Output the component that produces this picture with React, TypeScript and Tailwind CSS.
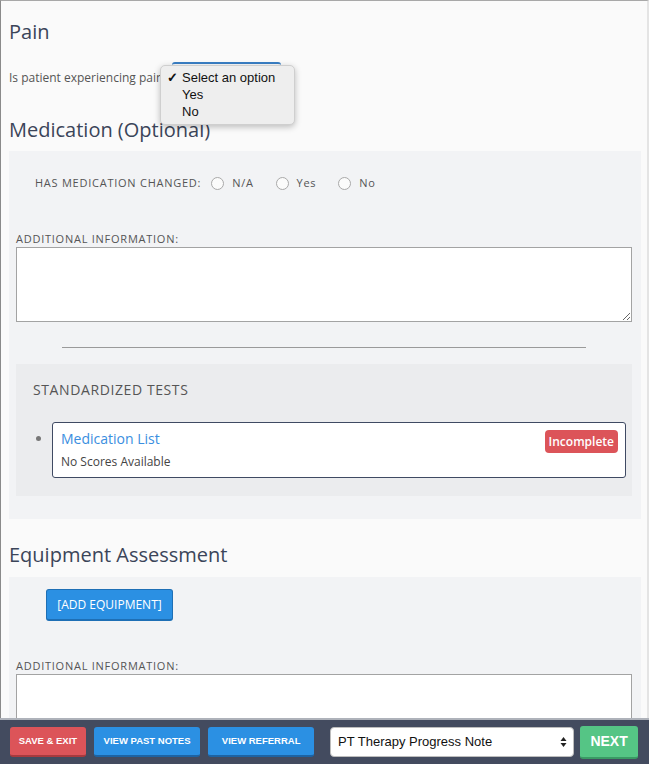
import React from "react";

const sans = { fontFamily: '"Open Sans", "Noto Sans", sans-serif' };
const helv = { fontFamily: '"Liberation Sans", Arial, sans-serif' };

function Radio({ label }: { label: string }) {
  return (
    <label className="flex items-center gap-[8px]">
      <span className="w-[13px] h-[13px] rounded-full border border-[#a9a9a9] bg-[#fbfbfb]" />
      <span className="text-[11px] tracking-[0.7px] text-[#555]">{label}</span>
    </label>
  );
}

function Label({ children }: { children: React.ReactNode }) {
  return (
    <div className="h-[16px] leading-[16px] text-[11px] tracking-[0.75px] uppercase text-[#555]">
      {children}
    </div>
  );
}

export default function App() {
  return (
    <div className="w-[649px] h-[764px] flex flex-col overflow-hidden bg-white" style={sans}>
      <div className="relative flex-1 overflow-hidden border-t border-[#a8a8a8] border-l border-l-[#8a8a8a] border-r-2 border-r-[#e4e4e4] bg-[#fafafa] pl-[8px] pr-[6px]">
        <h2 className="mt-[19px] text-[20px] leading-[24px] text-[#3b4559]">Pain</h2>

        <div className="mt-[18px] h-[32px] flex items-center">
          <span className="text-[12px] text-[#555]">Is patient experiencing pain</span>
          <div className="ml-[9px] w-[109px] h-[32px] border-t-2 border-[#3a7fc4] rounded-[3px]" />
        </div>

        {/* open select menu */}
        <div
          className="absolute left-[159px] top-[64px] w-[135px] h-[60px] rounded-[5px] border border-[#cfcfcf] bg-[#eeeeee] shadow-[0_2px_6px_rgba(0,0,0,0.25)] pt-[3px] text-[13px] text-[#111]"
          style={helv}
        >
          <div className="flex h-[17px] items-center">
            <span className="w-[21px] pl-[6px] text-[13px] font-bold">✓</span>
            <span>Select an option</span>
          </div>
          <div className="h-[17px] leading-[17px] pl-[21px]">Yes</div>
          <div className="h-[17px] leading-[17px] pl-[21px]">No</div>
        </div>

        <h2 className="mt-[24px] text-[20px] leading-[24px] text-[#3b4559]">Medication (Optional)</h2>

        <div className="mt-[9px] bg-[#f2f3f5] pl-[7px] pr-[9px] pt-[22px] pb-[23px]">
          <div className="flex items-center h-[20px] pl-[19px] gap-[9px]">
            <span className="text-[11px] tracking-[0.75px] text-[#555] mr-[1px]">HAS MEDICATION CHANGED:</span>
            <div className="flex items-center gap-[22px]">
              <Radio label="N/A" />
              <Radio label="Yes" />
              <Radio label="No" />
            </div>
          </div>

          <div className="mt-[38px]">
            <Label>Additional Information:</Label>
            <textarea className="block w-full h-[75px] border border-[#a3a3a3] bg-white resize-y" />
          </div>

          <div className="mt-[25px] ml-[46px] mr-[46px] border-t border-[#9a9a9a]" />

          <div className="mt-[16px] bg-[#ebecee] pl-[17px] pr-[6px] pt-[16px] pb-[18px]">
            <div className="text-[14px] leading-[20px] tracking-[0.6px] text-[#555]">STANDARDIZED TESTS</div>
            <div className="mt-[22px] flex">
              <div className="w-[19px] pt-[14px] pl-[3px]">
                <span className="block w-[5px] h-[5px] rounded-full bg-[#777]" />
              </div>
              <div className="flex-1 h-[56px] rounded-[3px] border border-[#3f4a63] bg-white pl-[8px] pr-[7px] pt-[7px] flex justify-between">
                <div>
                  <div className="text-[14px] leading-[18px] text-[#3a8ee0]">Medication List</div>
                  <div className="mt-[6px] text-[12px] leading-[16px] text-[#444]">No Scores Available</div>
                </div>
                <span className="h-[23px] px-[4px] rounded-[4px] bg-[#dc5459] text-white text-[12px] font-semibold leading-[23px]">
                  Incomplete
                </span>
              </div>
            </div>
          </div>
        </div>

        <h2 className="mt-[24px] text-[20px] leading-[24px] text-[#3b4559]">Equipment Assessment</h2>

        <div className="mt-[10px] bg-[#f2f3f5] pl-[7px] pr-[9px] pt-[12px] pb-[20px]">
          <button className="ml-[30px] h-[32px] w-[127px] rounded-[3px] bg-[#2b90e3] border border-[#1e6fb5] border-b-2 text-white text-[12px]">
            [ADD EQUIPMENT]
          </button>
          <div className="mt-[37px]">
            <Label>Additional Information:</Label>
            <textarea className="block w-full h-[80px] border border-[#a3a3a3] bg-white" />
          </div>
        </div>
      </div>

      <div className="h-[46px] shrink-0 border-t-2 border-[#aeb2ba] bg-[#434b5f] flex items-center pl-[10px] pr-[11px]" style={helv}>
        <button className="h-[30px] w-[76px] rounded-[3px] bg-[#dc5459] border-b-2 border-[#a83a3e] text-white text-[9.5px] font-bold">
          SAVE &amp; EXIT
        </button>
        <button className="ml-[8px] h-[30px] w-[107px] rounded-[3px] bg-[#2b90e3] border-b-2 border-[#1d63a3] text-white text-[9.5px] font-bold">
          VIEW PAST NOTES
        </button>
        <button className="ml-[8px] h-[30px] w-[106px] rounded-[3px] bg-[#2b90e3] border-b-2 border-[#1d63a3] text-white text-[9.5px] font-bold">
          VIEW REFERRAL
        </button>
        <div className="ml-[16px] h-[30px] w-[245px] rounded-[4px] bg-white border border-[#bdbdbd] flex items-center justify-between pl-[7px] pr-[6px] text-[13px] text-[#111]">
          <span>PT Therapy Progress Note</span>
          <svg width="7" height="12" viewBox="0 0 7 12">
            <path d="M3.5 1 L6.5 5 L0.5 5 Z" fill="#222" />
            <path d="M3.5 11 L6.5 7 L0.5 7 Z" fill="#222" />
          </svg>
        </div>
        <button className="ml-[6px] h-[33px] w-[58px] rounded-[3px] bg-[#55c585] border-b-2 border-[#3a9a64] text-white text-[14px] font-bold">
          NEXT
        </button>
      </div>
    </div>
  );
}
